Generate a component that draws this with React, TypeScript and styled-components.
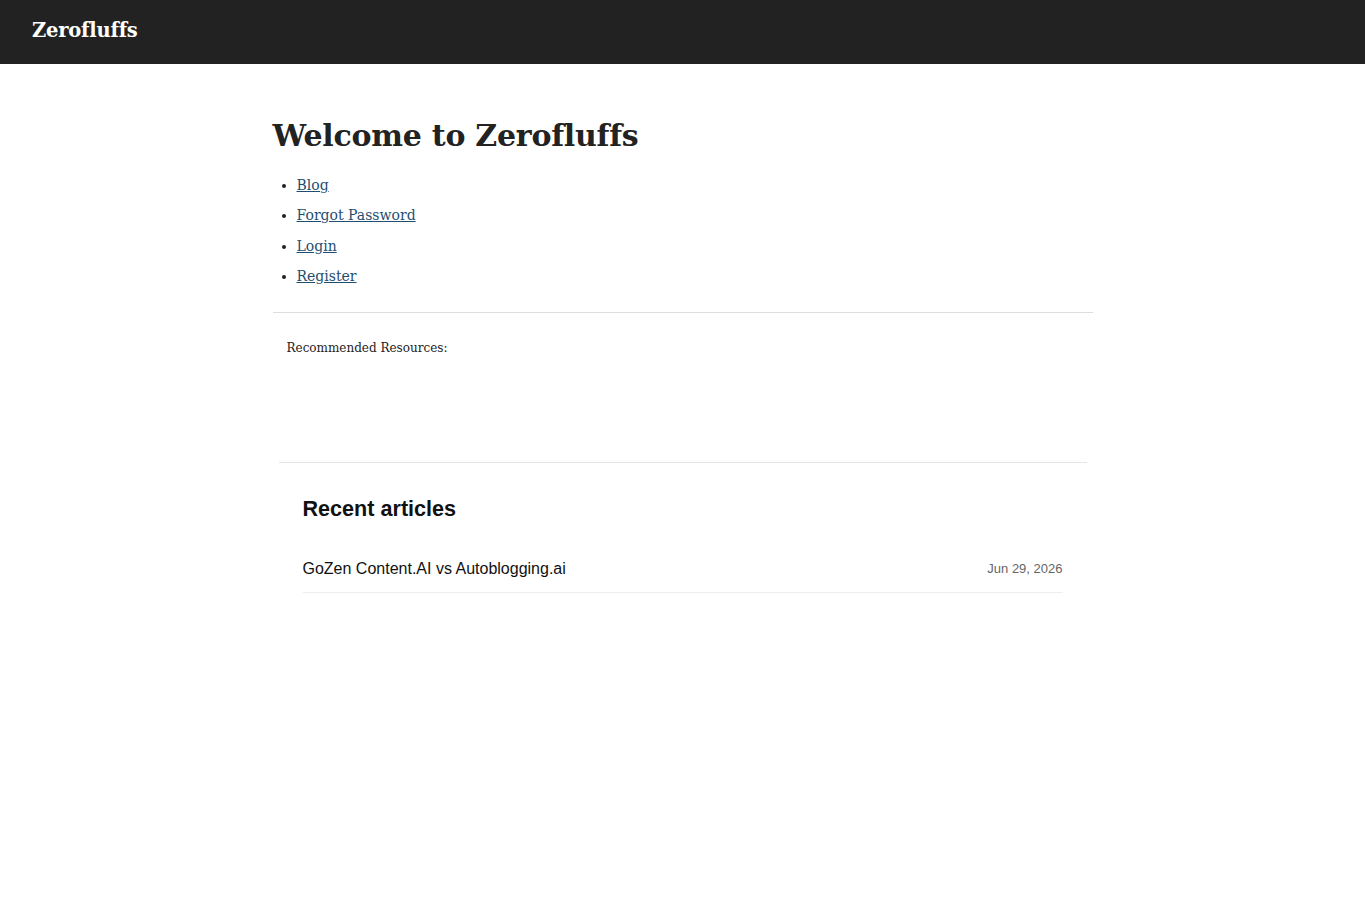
import React from "react";
import styled, { createGlobalStyle } from "styled-components";

const Global = createGlobalStyle`
  html, body { margin: 0; padding: 0; background: #fff; }
  body { font-family: Georgia, "DejaVu Serif", "Liberation Serif", serif; color: #222; }
`;

const TopBar = styled.header`
  height: 64px;
  background: #222;
  display: flex;
  align-items: center;
  padding: 0 32px;
  box-sizing: border-box;
`;

const Brand = styled.a`
  color: #fff;
  font-family: "DejaVu Serif", Georgia, serif;
  font-weight: bold;
  font-size: 19.5px;
  letter-spacing: -0.2px;
  text-decoration: none;
  margin-top: -3px;
`;

const Main = styled.main`
  max-width: 820px;
  margin: 0 auto;
  padding-top: 51px;
`;

const Title = styled.h1`
  font-family: "DejaVu Serif", Georgia, serif;
  font-weight: bold;
  font-size: 30px;
  letter-spacing: -0.25px;
  color: #222;
  margin: 0 0 18px;
  line-height: 42px;
`;

const NavList = styled.ul`
  margin: 0;
  padding-left: 24px;
  font-family: "DejaVu Serif", Georgia, serif;
  font-size: 14px;
`;

const NavItem = styled.li`
  line-height: 20px;
  margin-bottom: 10.33px;
`;

const NavLink = styled.a`
  color: #1f4e70;
  text-decoration: underline;
`;

const Rule = styled.hr`
  border: 0;
  border-top: 1px solid #ddd;
  margin: 26px 0 0;
`;

const Resources = styled.section`
  padding: 28px 14px 0;
  height: 121px;
  font-family: "DejaVu Serif", Georgia, serif;
  font-size: 12px;
  color: #222;
`;

const Recent = styled.section`
  margin: 0 6px;
  border-top: 1px solid #e5e5e5;
  padding: 0 24px;
  font-family: "Liberation Sans", Arial, Helvetica, sans-serif;
`;

const RecentHeading = styled.h2`
  font-size: 21.6px;
  font-weight: bold;
  color: #111;
  margin: 33px 0 27px;
  line-height: 26px;
`;

const ArticleRow = styled.div`
  display: flex;
  justify-content: space-between;
  align-items: center;
  padding: 11px 0 14px;
  border-bottom: 1px solid #eee;
`;

const ArticleTitle = styled.a`
  font-size: 16px;
  color: #111;
  text-decoration: none;
`;

const ArticleDate = styled.span`
  font-size: 13px;
  color: #666;
`;

export default function App() {
  const links = ["Blog", "Forgot Password", "Login", "Register"];
  return (
    <>
      <Global />
      <TopBar>
        <Brand href="#">Zerofluffs</Brand>
      </TopBar>
      <Main>
        <Title>Welcome to Zerofluffs</Title>
        <NavList>
          {links.map((l) => (
            <NavItem key={l}>
              <NavLink href="#">{l}</NavLink>
            </NavItem>
          ))}
        </NavList>
        <Rule />
        <Resources>Recommended Resources:</Resources>
        <Recent>
          <RecentHeading>Recent articles</RecentHeading>
          <ArticleRow>
            <ArticleTitle href="#">GoZen Content.AI vs Autoblogging.ai</ArticleTitle>
            <ArticleDate>Jun 29, 2026</ArticleDate>
          </ArticleRow>
        </Recent>
      </Main>
    </>
  );
}
